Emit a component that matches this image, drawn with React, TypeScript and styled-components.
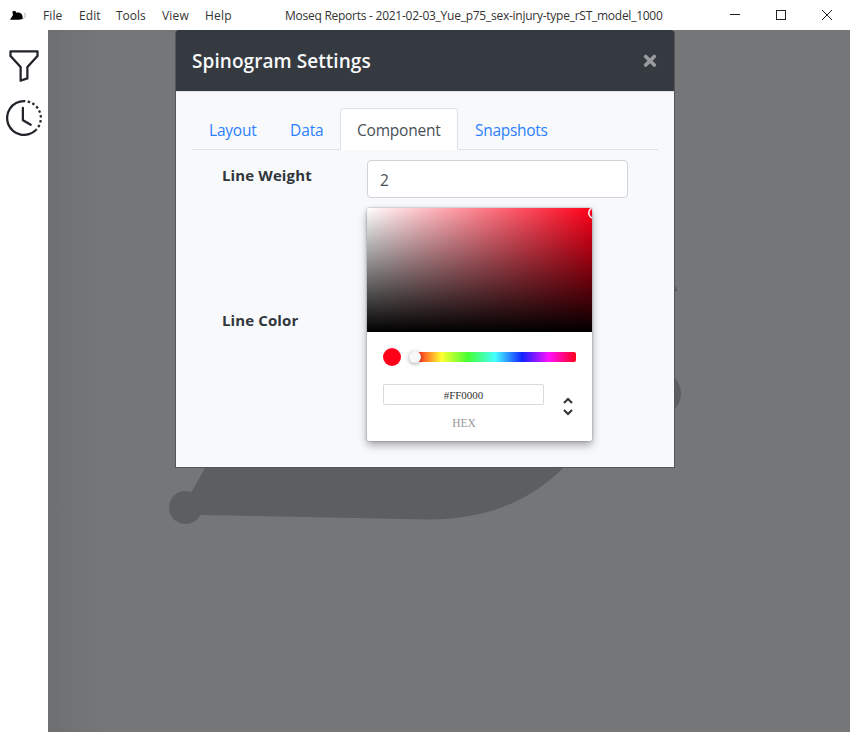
import React from 'react';
import styled, { createGlobalStyle } from 'styled-components';
import { BsFunnel, BsClockHistory } from 'react-icons/bs';

const GlobalStyle = createGlobalStyle`
  * { box-sizing: border-box; }
  body {
    margin: 0;
    background: #fff;
    color: #212529;
    font-family: "Open Sans", "Noto Sans", sans-serif;
    overflow: hidden;
  }
`;

const Window = styled.div`
  width: 850px;
  height: 732px;
  display: flex;
  flex-direction: column;
`;

const TitleBar = styled.header`
  height: 30px;
  flex: none;
  display: grid;
  grid-template-columns: 35px 250px 427px 1fr;
  align-items: center;
  background: #fff;
  color: #333;
  font-size: 12px;
  line-height: 28px;
  white-space: nowrap;
`;

const Logo = styled.svg`
  width: 18px;
  height: 12px;
  margin-left: 9px;
`;

const Menu = styled.nav`
  display: flex;
  padding-top: 2px;
`;

const MenuItem = styled.span<{ $width: number; $spacing: number }>`
  width: ${(p) => p.$width}px;
  padding-left: 8px;
  letter-spacing: ${(p) => p.$spacing}px;
`;

const WindowTitle = styled.span`
  padding-top: 2px;
  letter-spacing: -0.255px;
`;

const WindowControls = styled.svg`
  width: 138px;
  height: 30px;
  fill: none;
  stroke: #222;
`;

const Main = styled.div`
  flex: 1;
  display: flex;
  min-height: 0;
`;

const Sidebar = styled.aside`
  width: 48px;
  flex: none;
  display: flex;
  flex-direction: column;
  align-items: center;
  gap: 16px;
  padding-top: 18px;
  background: #fff;
  svg { display: block; flex: none; }
`;

const Workspace = styled.main`
  flex: 1;
  position: relative;
  display: flex;
  align-items: flex-start;
  padding-left: 127px;
  background: linear-gradient(90deg, #6c6e6f 0, #707273 20px, #757678 52px);
`;

const Backdrop = styled.svg`
  position: absolute;
  inset: 0;
  width: 802px;
  height: 702px;
  fill: #5d5e60;
`;

const Modal = styled.section`
  position: relative;
  width: 500px;
  height: 438px;
  border: 1px solid #545658;
  border-top: 0;
  border-radius: 3px 3px 1px 1px;
  background: #f8f9fb;
`;

const ModalHeader = styled.div`
  height: 62px;
  display: flex;
  align-items: center;
  justify-content: space-between;
  padding: 0 17px 0 16px;
  border-bottom: 1px solid #dee2e6;
  border-radius: 2px 2px 0 0;
  background: #353940;
`;

const ModalTitle = styled.h5`
  margin: 0;
  color: #f8f9fa;
  font-size: 19px;
  font-weight: 600;
  line-height: 30px;
  letter-spacing: 0.06px;
`;

const CloseIcon = styled.svg`
  width: 14px;
  height: 14px;
  stroke: #999c9f;
  stroke-width: 3.6;
  stroke-linecap: round;
`;

const ModalBody = styled.div`
  padding: 16px;
`;

const Tabs = styled.div`
  display: flex;
  height: 42px;
  border-bottom: 1px solid #dee2e6;
`;

const Tab = styled.a<{ $active?: boolean; $width: number; $spacing: number }>`
  width: ${(p) => p.$width}px;
  height: 42px;
  padding: 0 16px;
  border: 1px solid ${(p) => (p.$active ? '#dee2e6' : 'transparent')};
  border-bottom-color: ${(p) => (p.$active ? '#fff' : 'transparent')};
  border-radius: 4px 4px 0 0;
  background: ${(p) => (p.$active ? '#fff' : 'transparent')};
  color: ${(p) => (p.$active ? '#495057' : '#2b7fff')};
  font-size: 15.5px;
  line-height: 42px;
  letter-spacing: ${(p) => p.$spacing}px;
  white-space: nowrap;
`;

const Form = styled.div`
  display: grid;
  grid-template-columns: 145px 261px;
  row-gap: 10px;
  padding: 10px 30px 0;
`;

const Label = styled.label<{ $center?: boolean }>`
  align-self: ${(p) => (p.$center ? 'center' : 'start')};
  padding-top: ${(p) => (p.$center ? 0 : 3)}px;
  margin-top: ${(p) => (p.$center ? -9 : 0)}px;
  font-size: 15px;
  font-weight: 700;
  line-height: 24px;
  letter-spacing: 0.12px;
  color: #30363b;
`;

const NumberInput = styled.div`
  height: 38px;
  padding: 0 12px;
  border: 1px solid #ced4da;
  border-radius: 4px;
  background: #fff;
  color: #495057;
  font-size: 15.5px;
  line-height: 38px;
`;

const Picker = styled.div`
  width: 225px;
  height: 233px;
  border-radius: 2px;
  background: #fff;
  box-shadow: 0 0 2px rgba(0, 0, 0, 0.4), 0 4px 8px rgba(0, 0, 0, 0.35);
  font-family: "Liberation Serif", serif;
`;

const Saturation = styled.div`
  position: relative;
  height: 124px;
  overflow: hidden;
  border-radius: 2px 2px 0 0;
  background: linear-gradient(to top, #000, transparent),
    linear-gradient(to right, #fff, rgba(255, 255, 255, 0)), #ff0019;
`;

const SaturationPointer = styled.span`
  position: absolute;
  top: -1px;
  left: 221px;
  width: 12px;
  height: 12px;
  border-radius: 50%;
  box-shadow: inset 0 0 0 1.5px #fff;
`;

const HueRow = styled.div`
  display: flex;
  align-items: center;
  gap: 10px;
  height: 18px;
  margin: 16px 16px 0;
`;

const Swatch = styled.span`
  width: 18px;
  height: 18px;
  border-radius: 50%;
  background: #ff0019;
`;

const HueBar = styled.div`
  position: relative;
  flex: 1;
  height: 10px;
  border-radius: 2px;
  background: linear-gradient(to right, #ff0019 2px, #ffff33 18.5%, #44ff33 34.5%,
    #44ffff 51%, #1122ff 67.5%, #ff11ff 83.5%, #ff0019 100%);
`;

const HuePointer = styled.span`
  position: absolute;
  top: -1px;
  left: -2px;
  width: 12px;
  height: 12px;
  border-radius: 50%;
  background: #f8f8f8;
  box-shadow: 0 1px 4px rgba(0, 0, 0, 0.37);
`;

const HexRow = styled.div`
  display: flex;
  justify-content: space-between;
  margin: 18px 16px 0;
`;

const HexField = styled.div`
  width: 161px;
  text-align: center;
  font-size: 11px;
`;

const HexValue = styled.div`
  height: 21px;
  border-radius: 2px;
  box-shadow: inset 0 0 0 1px #dadada;
  color: #333;
  line-height: 22px;
`;

const HexLabel = styled.div`
  margin-top: 12px;
  padding-left: 1px;
  color: #969696;
  font-size: 11.5px;
  line-height: 12px;
`;

const Chevrons = styled.svg`
  width: 16px;
  height: 24px;
  margin-top: 11px;
  fill: none;
  stroke: #333;
  stroke-width: 2;
`;

const menu = [
  { label: 'File', width: 36, spacing: 0.1 },
  { label: 'Edit', width: 37, spacing: 0.1 },
  { label: 'Tools', width: 46, spacing: 0 },
  { label: 'View', width: 43, spacing: 0.2 },
  { label: 'Help', width: 43, spacing: 0.2 },
];

const tabs = [
  { label: 'Layout', width: 81, spacing: -0.2 },
  { label: 'Data', width: 67, spacing: -0.1 },
  { label: 'Component', width: 118, spacing: -0.2, active: true },
  { label: 'Snapshots', width: 107, spacing: -0.3 },
];

export default function App() {
  return (
    <>
      <GlobalStyle />
      <Window>
        <TitleBar>
          <Logo viewBox="0 0 18 12">
            <path
              d="M1 10.7 L4 6 L3.3 2.5 L6 1.7 L7.4 3.8 C10 2.6 13 4.2 13.4 6.8 L13.8 10 L10 10.7 Z"
              fill="#000"
            />
            <path d="M13.4 9.5 C16.3 9 16.8 6.500 15.500 4" fill="none" stroke="#888" strokeWidth=".7" />
          </Logo>
          <Menu>
            {menu.map((m) => (
              <MenuItem key={m.label} $width={m.width} $spacing={m.spacing}>
                {m.label}
              </MenuItem>
            ))}
          </Menu>
          <WindowTitle>Moseq Reports - 2021-02-03_Yue_p75_sex-injury-type_rST_model_1000</WindowTitle>
          <WindowControls viewBox="0 0 138 30">
            <path d="M18 14.5h10" />
            <rect x="64.5" y="10.5" width="9" height="9" />
            <path d="M110 10l10 10M120 10l-10 10" />
          </WindowControls>
        </TitleBar>
        <Main>
          <Sidebar>
            <BsFunnel size={36} />
            <BsClockHistory size={36} />
          </Sidebar>
          <Workspace>
            <Backdrop viewBox="48 30 802 702">
              <path d="M205.500 467 L191 493 L200 515 L430 519.500 C485 519 530 502 564 467 L564 440 L220 440 Z" />
              <circle cx="185.500" cy="507.500" r="16.500" />
              <circle cx="658" cy="393.500" r="23" />
              <path d="M672 278 L677.500 290.500 L672 293 Z" />
            </Backdrop>
            <Modal>
              <ModalHeader>
                <ModalTitle>Spinogram Settings</ModalTitle>
                <CloseIcon viewBox="0 0 14 14">
                  <path d="M2.700 2.400l8.600 8.600M11.300 2.400l-8.600 8.600" />
                </CloseIcon>
              </ModalHeader>
              <ModalBody>
                <Tabs>
                  {tabs.map((t) => (
                    <Tab key={t.label} $width={t.width} $spacing={t.spacing} $active={t.active}>
                      {t.label}
                    </Tab>
                  ))}
                </Tabs>
                <Form>
                  <Label>Line Weight</Label>
                  <NumberInput>2</NumberInput>
                  <Label $center>Line Color</Label>
                  <Picker>
                    <Saturation>
                      <SaturationPointer />
                    </Saturation>
                    <HueRow>
                      <Swatch />
                      <HueBar>
                        <HuePointer />
                      </HueBar>
                    </HueRow>
                    <HexRow>
                      <HexField>
                        <HexValue>#FF0000</HexValue>
                        <HexLabel>HEX</HexLabel>
                      </HexField>
                      <Chevrons viewBox="0 0 16 24">
                        <path d="M4 8l4-4l4 4M4 15l4 4l4-4" />
                      </Chevrons>
                    </HexRow>
                  </Picker>
                </Form>
              </ModalBody>
            </Modal>
          </Workspace>
        </Main>
      </Window>
    </>
  );
}
